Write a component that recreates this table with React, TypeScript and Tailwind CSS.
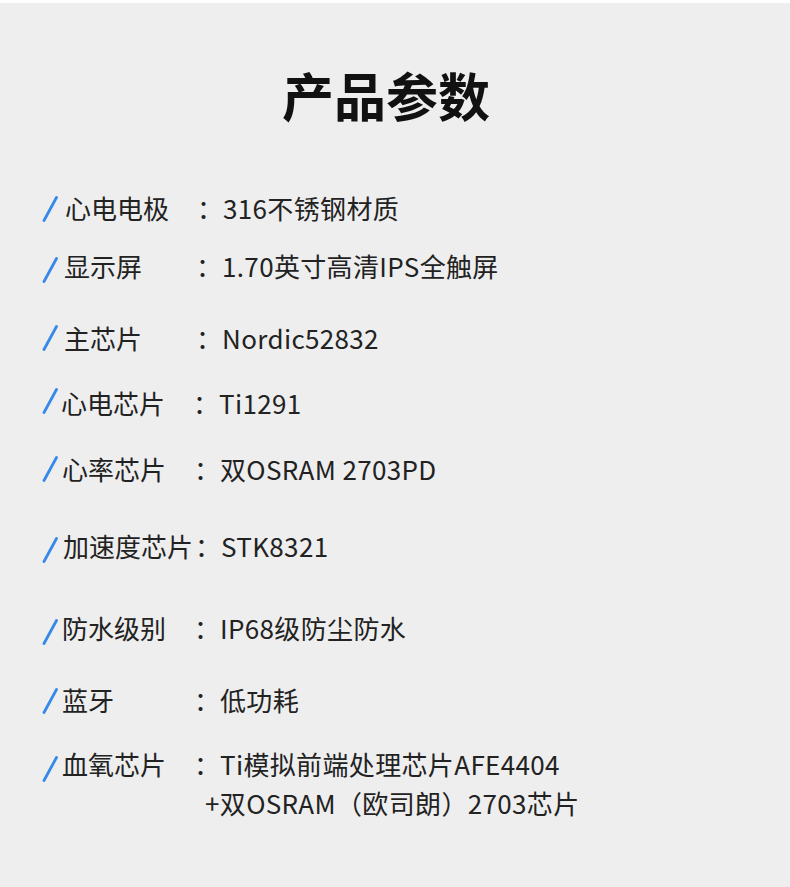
import React from "react";

type Row = {
  label: string;
  value: React.ReactNode;
  mt: string;
  slashY: string;
  labelMl: string;
};

const rows: Row[] = [
  { label: "心电电极", value: "316不锈钢材质", mt: "mt-[68px]", slashY: "translate-y-[1px]", labelMl: "ml-[7px]" },
  { label: "显示屏", value: "1.70英寸高清IPS全触屏", mt: "mt-[28px]", slashY: "translate-y-[4px]", labelMl: "ml-[6px]" },
  { label: "主芯片", value: "Nordic52832", mt: "mt-[42px]", slashY: "translate-y-[0px]", labelMl: "ml-[6px]" },
  { label: "心电芯片", value: "Ti1291", mt: "mt-[35px]", slashY: "translate-y-[-2px]", labelMl: "ml-[3px]" },
  { label: "心率芯片", value: "双OSRAM 2703PD", mt: "mt-[36px]", slashY: "translate-y-[0px]", labelMl: "ml-[4px]" },
  { label: "加速度芯片", value: "STK8321", mt: "mt-[47px]", slashY: "translate-y-[4px]", labelMl: "ml-[5px]" },
  { label: "防水级别", value: "IP68级防尘防水", mt: "mt-[52px]", slashY: "translate-y-[4px]", labelMl: "ml-[4px]" },
  { label: "蓝牙", value: "低功耗", mt: "mt-[42px]", slashY: "translate-y-[1px]", labelMl: "ml-[4px]" },
];

function Slash({ cls }: { cls: string }) {
  return (
    <svg width="16" height="26" viewBox="0 0 16 26" className={"shrink-0 " + cls}>
      <line x1="2" y1="24.5" x2="14.5" y2="1.5" stroke="#3689e8" strokeWidth="2.8" strokeLinecap="round" />
    </svg>
  );
}

export default function App() {
  return (
    <div
      className="w-[790px] h-[887px] bg-[#eeeeee] border-t-[3px] border-white overflow-hidden text-[#222222]"
      style={{ fontFamily: '"Noto Sans CJK SC", "Noto Sans", sans-serif' }}
    >
      <h1 className="pt-[62px] pl-[282px] text-[52px] leading-[60px] font-bold text-[#111111]">
        产品参数
      </h1>
      <div className="flex flex-col pl-[42px] text-[26px]">
        {rows.map((r) => (
          <div key={r.label} className={"flex items-center h-[30px] leading-[30px] " + r.mt}>
            <Slash cls={r.slashY} />
            <div className={"flex " + r.labelMl}>
              <span className="w-[132px] whitespace-nowrap">{r.label}</span>
              <span className="w-[26px]">：</span>
              <span className="whitespace-nowrap tracking-[0.35px]">{r.value}</span>
            </div>
          </div>
        ))}
        <div className="flex items-start mt-[29px] leading-[39px]">
          <Slash cls="translate-y-[12px]" />
          <div className="flex ml-[4px]">
            <span className="w-[132px] whitespace-nowrap">血氧芯片</span>
            <span className="w-[26px]">：</span>
            <div className="flex flex-col tracking-[0.35px]">
              <span className="whitespace-nowrap">Ti模拟前端处理芯片AFE4404</span>
              <span className="whitespace-nowrap ml-[-15px]">+双OSRAM（欧司朗）2703芯片</span>
            </div>
          </div>
        </div>
      </div>
    </div>
  );
}
